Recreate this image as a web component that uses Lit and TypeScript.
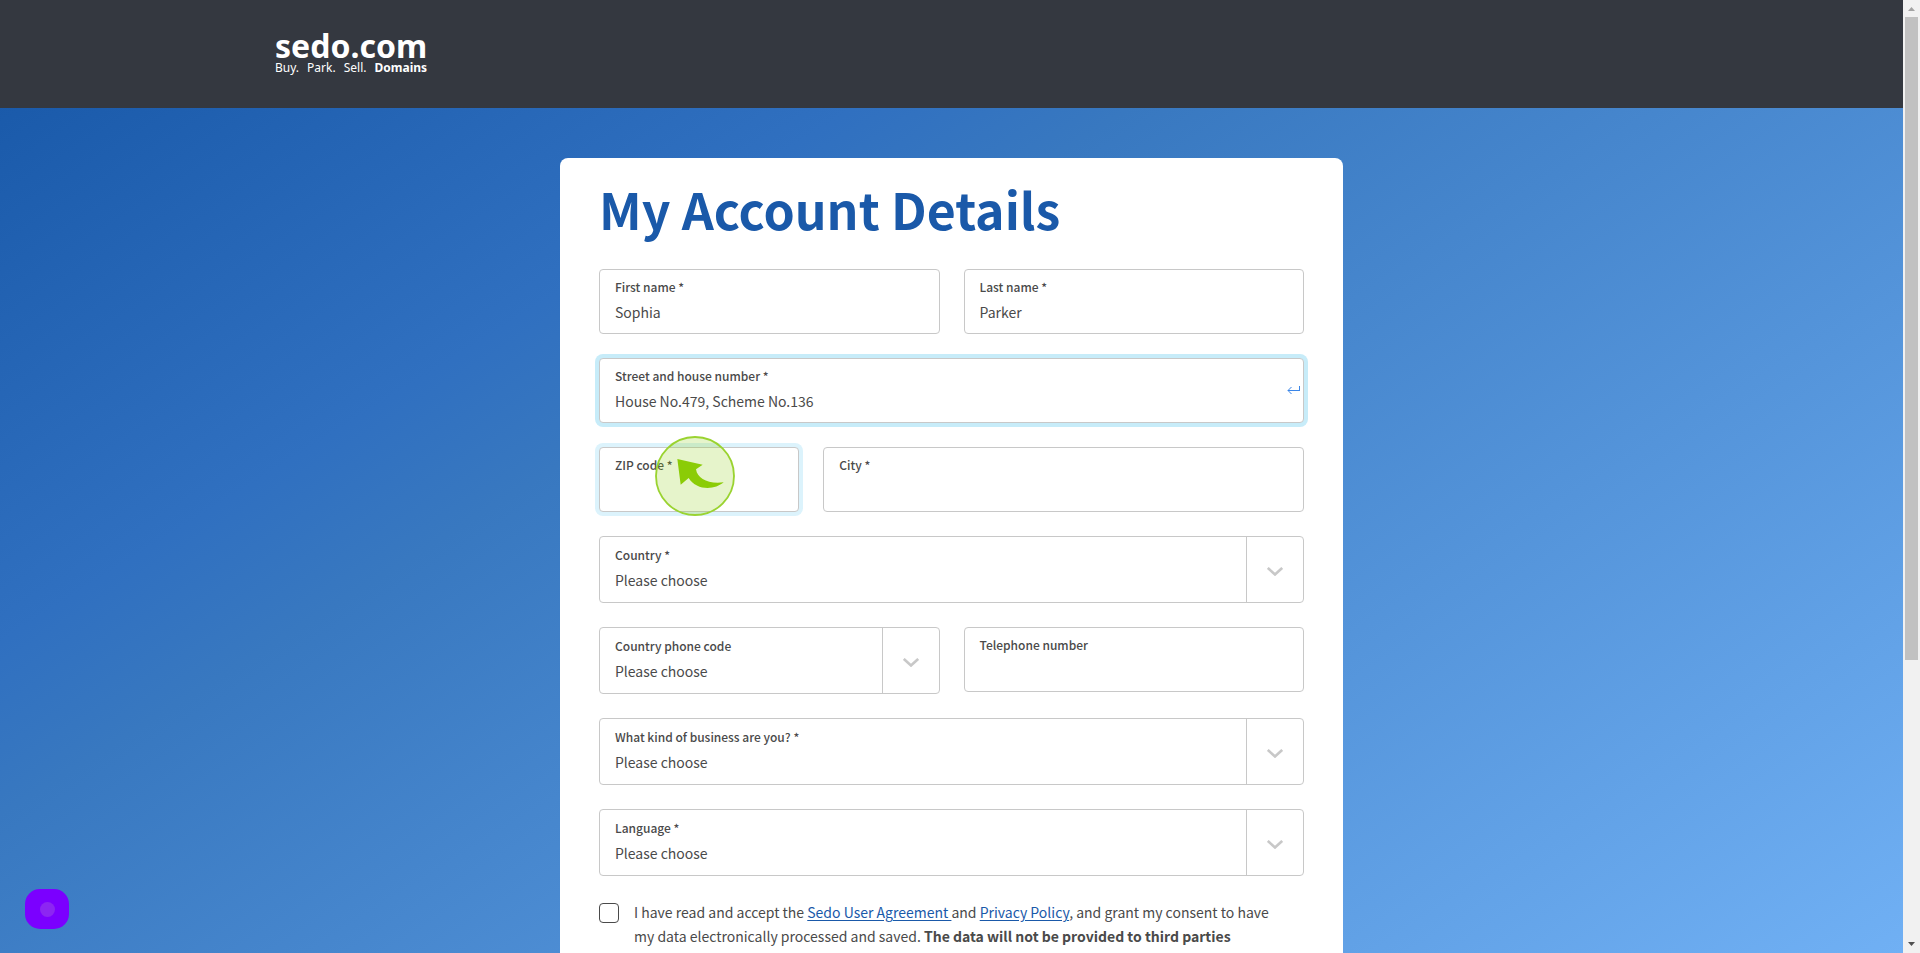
import { LitElement, html, css, nothing } from "lit";
import { customElement } from "lit/decorators.js";

const chevron = html`<svg class="chevron" viewBox="0 0 16 9" aria-hidden="true">
  <path d="M0.8 0.9 L8 7.5 L15.2 0.9" fill="none" stroke="#c8c8c8" stroke-width="2.6" />
</svg>`;

@customElement("app-root")
export class AppRoot extends LitElement {
  static styles = css`
    :host {
      display: flex;
      height: 100vh;
      overflow: hidden;
      font-family: "Source Sans Pro", "Noto Sans CJK SC", sans-serif;
      font-size: 14px;
      line-height: 24px;
      color: #4a4a4a;
    }
    * {
      box-sizing: border-box;
    }
    .page {
      flex: 1;
      min-width: 0;
      display: flex;
      flex-direction: column;
      overflow-y: auto;
      scrollbar-width: none;
      background: linear-gradient(148deg, #1656a6 0%, #3070c0 30%, #3878c0 38%, #70b0f4 100%);
    }
    .header {
      flex: none;
      height: 108px;
      padding: 30px 275px 0;
      background: #343840;
    }
    .logo {
      display: inline-flex;
      flex-direction: column;
      font-family: "Noto Sans", Verdana, sans-serif;
      color: #fff;
      text-decoration: none;
    }
    .brand {
      font-size: 32px;
      line-height: 32px;
      font-weight: 700;
    }
    .tagline {
      display: flex;
      justify-content: space-between;
      font-size: 12px;
      line-height: 12px;
    }
    .card {
      flex: none;
      width: 783px;
      max-width: 100%;
      margin: 50px auto;
      padding: 20px 39px 40px;
      background: #fff;
      border-radius: 8px;
    }
    .title {
      margin: 0 0 31px;
      font-size: 50px;
      line-height: 60px;
      font-weight: 700;
      color: #1a59a9;
    }
    .form {
      display: flex;
      flex-direction: column;
      gap: 24px;
    }
    .row {
      display: grid;
      gap: 24px;
      align-items: start;
    }
    .halves {
      grid-template-columns: 1fr 1fr;
    }
    .place {
      grid-template-columns: 5fr 12fr;
    }
    .field {
      position: relative;
      display: flex;
      flex-direction: column;
      gap: 3px;
      min-width: 0;
      padding: 7px 15px 9px;
      border: 1px solid #c8c8c8;
      border-radius: 4px;
      background: #fff;
    }
    .focused {
      box-shadow: 0 0 0 4px #c7ecf9;
    }
    .hovered {
      box-shadow: 0 0 0 4px #dcf3fc;
    }
    .label {
      font-size: 12px;
      line-height: 20px;
      font-weight: 500;
    }
    .input {
      width: 100%;
      height: 24px;
      padding: 0;
      border: 0;
      outline: 0;
      appearance: none;
      background: transparent;
      font: inherit;
      color: inherit;
    }
    .choice {
      padding: 8px 72px 10px 15px;
    }
    .opener {
      position: absolute;
      inset: 0 0 0 auto;
      width: 57px;
      display: flex;
      align-items: center;
      justify-content: center;
      padding-top: 4px;
      border-left: 1px solid #c8c8c8;
      pointer-events: none;
    }
    .chevron {
      width: 16px;
      height: 9px;
    }
    .enter {
      position: absolute;
      right: 3px;
      top: 27px;
      width: 13px;
      height: 9px;
    }
    .pointer {
      position: absolute;
      left: 55px;
      top: -12px;
      width: 80px;
      height: 80px;
      z-index: 2;
      pointer-events: none;
    }
    .terms {
      display: flex;
      gap: 15px;
    }
    .tick {
      flex: none;
      width: 20px;
      height: 20px;
      margin: 3px 0 0;
      appearance: none;
      border: 1px solid #4a4a4a;
      border-radius: 4px;
      background: #fff;
    }
    .consent {
      padding-right: 16px;
    }
    .strong {
      font-weight: 700;
    }
    .link {
      color: #1a59a9;
      text-decoration: underline;
      text-underline-offset: 2px;
    }
    .scrollbar {
      flex: none;
      width: 17px;
      display: flex;
      flex-direction: column;
      align-items: center;
      background: #f1f1f1;
    }
    .arrow {
      width: 17px;
      height: 17px;
    }
    .track {
      flex: 1;
      width: 13px;
    }
    .thumb {
      height: 70%;
      background: #c1c1c1;
    }
    .recorder {
      position: fixed;
      left: 25px;
      bottom: 24px;
      width: 44px;
      height: 40px;
      display: flex;
      align-items: center;
      justify-content: center;
      padding: 0;
      border: 0;
      border-radius: 15px;
      background: #7b00ff;
    }
    .dot {
      width: 15px;
      height: 15px;
      border-radius: 50%;
      background: #8c26f2;
    }
  `;

  private text(id: string, label: string, value = "", state = "", extra: unknown = nothing) {
    return html`<div class="field ${state}">
      <label class="label" for=${id}>${label}</label>
      <input class="input" id=${id} type="text" .value=${value} />
      ${extra}
    </div>`;
  }

  private choice(id: string, label: string) {
    return html`<div class="field choice">
      <label class="label" for=${id}>${label}</label>
      <select class="input" id=${id}>
        <option>Please choose</option>
      </select>
      <span class="opener">${chevron}</span>
    </div>`;
  }

  render() {
    const enter = html`<svg class="enter" viewBox="0 0 13 9" aria-hidden="true">
      <path d="M12.5 0 V5 M13 4.5 H1 M4.5 1 L1 4.5 L4.5 8" fill="none" stroke="#3b86e8" />
    </svg>`;
    const pointer = html`<svg class="pointer" viewBox="0 0 240 240" aria-hidden="true">
      <circle cx="120" cy="120" r="117" fill="#8ccc10" fill-opacity="0.22" stroke="#9ad330" stroke-width="5.5" />
      <path d="M67 69 L143 86 L123 100 C127 128 160 145 206 139 C180 162 125 165 101 126 L77 146 Z" fill="#8bcc06" />
    </svg>`;
    return html`
      <div class="page">
        <header class="header">
          <a class="logo" href="#">
            <span class="brand">sedo.com</span>
            <span class="tagline"><span>Buy.</span><span>Park.</span><span>Sell.</span><span class="strong">Domains</span></span>
          </a>
        </header>
        <main class="card">
          <h1 class="title">My Account Details</h1>
          <form class="form">
            <div class="row halves">
              ${this.text("first", "First name *", "Sophia")} ${this.text("last", "Last name *", "Parker")}
            </div>
            ${this.text("street", "Street and house number *", "House No.479, Scheme No.136", "focused", enter)}
            <div class="row place">
              ${this.text("zip", "ZIP code *", "", "hovered", pointer)} ${this.text("city", "City *")}
            </div>
            ${this.choice("country", "Country *")}
            <div class="row halves">
              ${this.choice("code", "Country phone code")} ${this.text("phone", "Telephone number")}
            </div>
            ${this.choice("business", "What kind of business are you? *")} ${this.choice("language", "Language *")}
            <div class="terms">
              <input class="tick" id="terms" type="checkbox" />
              <label class="consent" for="terms"
                >I have read and accept the <a class="link" href="#">Sedo User Agreement </a>and
                <a class="link" href="#">Privacy Policy</a>, and grant my consent to have my data electronically
                processed and saved. <b class="strong">The data will not be provided to third parties</b></label
              >
            </div>
          </form>
        </main>
      </div>
      <div class="scrollbar" aria-hidden="true">
        <svg class="arrow" viewBox="0 0 17 17"><path d="M5 11 L8.5 7 L12 11 Z" fill="#a3a3a3" /></svg>
        <div class="track"><div class="thumb"></div></div>
        <svg class="arrow" viewBox="0 0 17 17"><path d="M5 6 L8.5 10 L12 6 Z" fill="#505050" /></svg>
      </div>
      <button class="recorder" type="button" aria-label="Record"><span class="dot"></span></button>
    `;
  }
}
